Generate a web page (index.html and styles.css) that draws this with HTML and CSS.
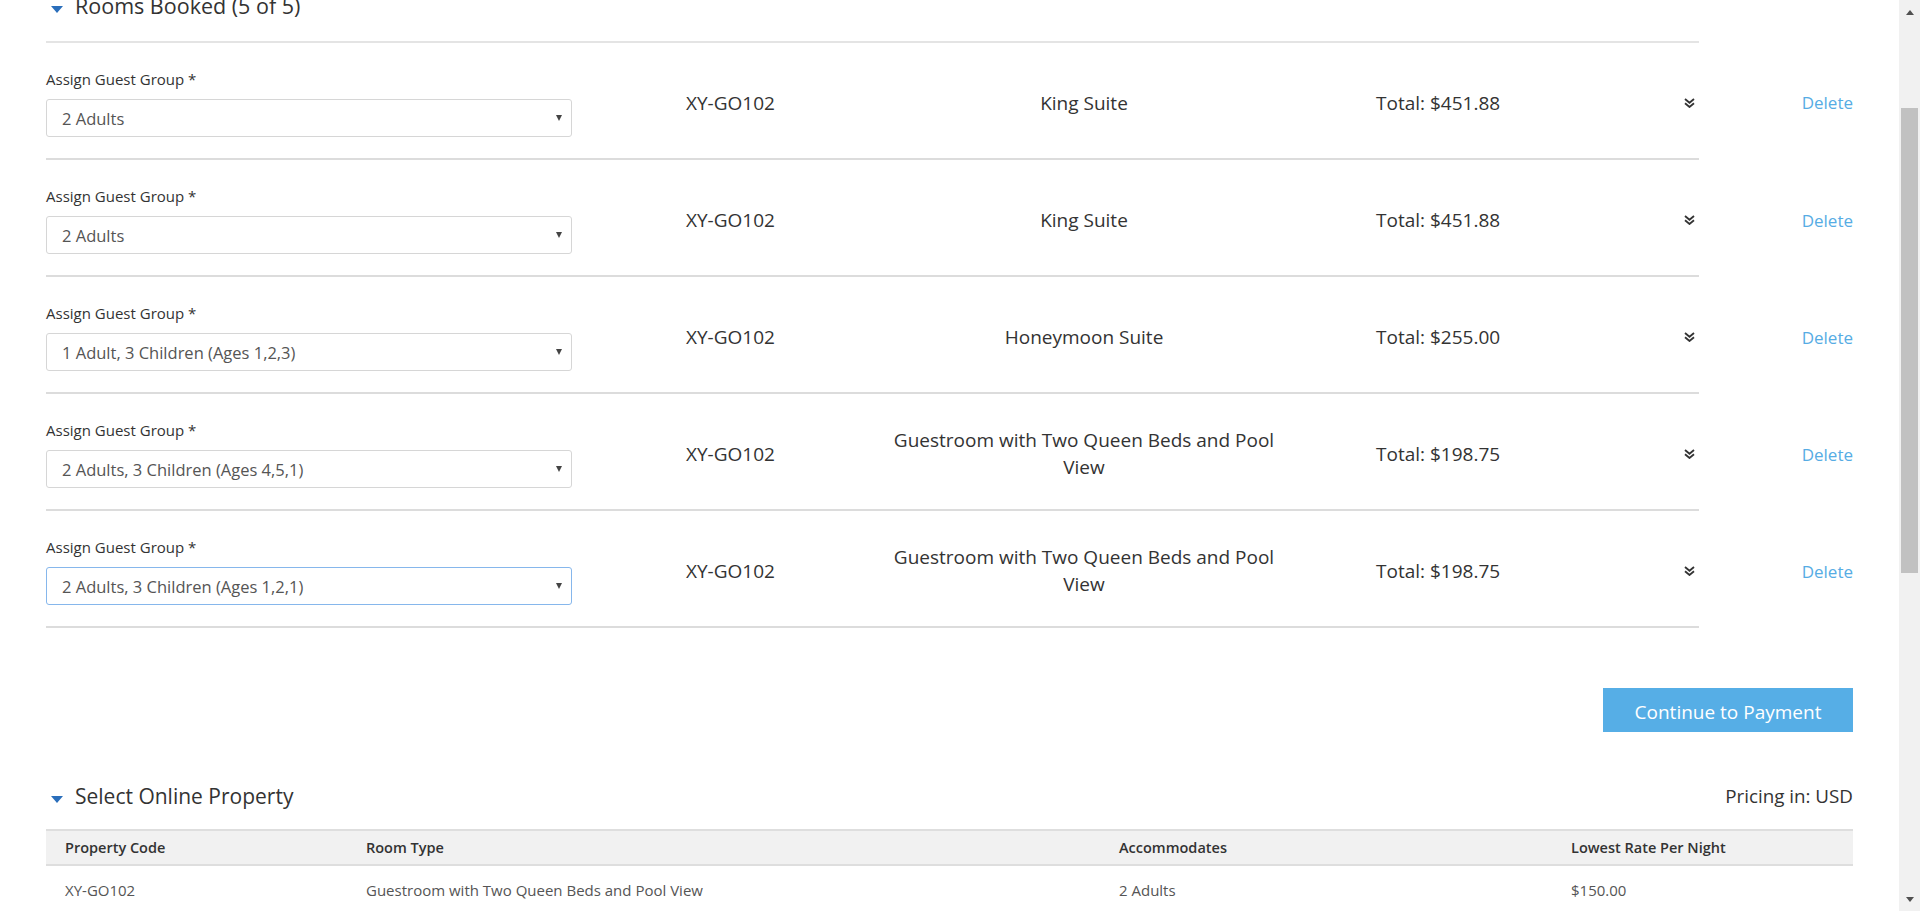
FILE: index.html
```html
<!DOCTYPE html>
<html lang="en">
<head>
<meta charset="utf-8">
<title>Rooms Booked</title>
<link rel="stylesheet" href="styles.css">
</head>
<body>
<div class="page">
  <main class="main">
    <section class="booked">
      <h2 class="section-title first"><span class="caret"></span>Rooms Booked (5 of 5)</h2>
      <div class="rooms">
        <div class="room">
          <div class="room-main">
            <div class="guest">
              <label class="guest-label">Assign Guest Group *</label>
              <div class="select"><span>2 Adults</span><span class="sel-arrow"></span></div>
            </div>
            <div class="code">XY-GO102</div>
            <div class="type">King Suite</div>
            <div class="total">Total: $451.88</div>
            <div class="expand"><svg width="11" height="10" viewBox="0 0 11 10"><path d="M1 1l4.5 3.8L10 1M1 5.2L5.5 9 10 5.2" fill="none" stroke="#333" stroke-width="1.8"/></svg></div>
          </div>
          <div class="delete"><a href="#">Delete</a></div>
        </div>
        <div class="room">
          <div class="room-main">
            <div class="guest">
              <label class="guest-label">Assign Guest Group *</label>
              <div class="select"><span>2 Adults</span><span class="sel-arrow"></span></div>
            </div>
            <div class="code">XY-GO102</div>
            <div class="type">King Suite</div>
            <div class="total">Total: $451.88</div>
            <div class="expand"><svg width="11" height="10" viewBox="0 0 11 10"><path d="M1 1l4.5 3.8L10 1M1 5.2L5.5 9 10 5.2" fill="none" stroke="#333" stroke-width="1.8"/></svg></div>
          </div>
          <div class="delete"><a href="#">Delete</a></div>
        </div>
        <div class="room">
          <div class="room-main">
            <div class="guest">
              <label class="guest-label">Assign Guest Group *</label>
              <div class="select"><span>1 Adult, 3 Children (Ages 1,2,3)</span><span class="sel-arrow"></span></div>
            </div>
            <div class="code">XY-GO102</div>
            <div class="type">Honeymoon Suite</div>
            <div class="total">Total: $255.00</div>
            <div class="expand"><svg width="11" height="10" viewBox="0 0 11 10"><path d="M1 1l4.5 3.8L10 1M1 5.2L5.5 9 10 5.2" fill="none" stroke="#333" stroke-width="1.8"/></svg></div>
          </div>
          <div class="delete"><a href="#">Delete</a></div>
        </div>
        <div class="room">
          <div class="room-main">
            <div class="guest">
              <label class="guest-label">Assign Guest Group *</label>
              <div class="select"><span>2 Adults, 3 Children (Ages 4,5,1)</span><span class="sel-arrow"></span></div>
            </div>
            <div class="code">XY-GO102</div>
            <div class="type">Guestroom with Two Queen Beds and Pool View</div>
            <div class="total">Total: $198.75</div>
            <div class="expand"><svg width="11" height="10" viewBox="0 0 11 10"><path d="M1 1l4.5 3.8L10 1M1 5.2L5.5 9 10 5.2" fill="none" stroke="#333" stroke-width="1.8"/></svg></div>
          </div>
          <div class="delete"><a href="#">Delete</a></div>
        </div>
        <div class="room">
          <div class="room-main">
            <div class="guest">
              <label class="guest-label">Assign Guest Group *</label>
              <div class="select focused"><span>2 Adults, 3 Children (Ages 1,2,1)</span><span class="sel-arrow"></span></div>
            </div>
            <div class="code">XY-GO102</div>
            <div class="type">Guestroom with Two Queen Beds and Pool View</div>
            <div class="total">Total: $198.75</div>
            <div class="expand"><svg width="11" height="10" viewBox="0 0 11 10"><path d="M1 1l4.5 3.8L10 1M1 5.2L5.5 9 10 5.2" fill="none" stroke="#333" stroke-width="1.8"/></svg></div>
          </div>
          <div class="delete"><a href="#">Delete</a></div>
        </div>
      </div>
      <div class="actions"><button class="btn-primary" type="button">Continue to Payment</button></div>
    </section>
    <section class="property">
      <div class="property-head">
        <h2 class="section-title"><span class="caret"></span>Select Online Property</h2>
        <span class="pricing">Pricing in: USD</span>
      </div>
      <table class="prop-table">
        <colgroup><col class="c1"><col class="c2"><col class="c3"><col class="c4"></colgroup>
        <thead>
          <tr><th>Property Code</th><th>Room Type</th><th>Accommodates</th><th>Lowest Rate Per Night</th></tr>
        </thead>
        <tbody>
          <tr><td>XY-GO102</td><td>Guestroom with Two Queen Beds and Pool View</td><td>2 Adults</td><td>$150.00</td></tr>
        </tbody>
      </table>
    </section>
  </main>
  <aside class="scrollbar">
    <div class="sb-btn"><span class="sb-up"></span></div>
    <div class="sb-thumb"></div>
    <div class="sb-btn sb-bottom"><span class="sb-down"></span></div>
  </aside>
</div>
</body>
</html>
```

FILE: styles.css
```css
html, body {
  margin: 0;
  padding: 0;
}
body {
  font-family: "Open Sans", "Noto Sans", sans-serif;
  color: #333;
  background: #fff;
}
.page {
  display: flex;
  height: 911px;
  overflow: hidden;
}
.main {
  flex: 1;
  min-width: 0;
  padding: 0 46px;
  overflow: hidden;
}

/* section titles */
.section-title {
  display: flex;
  align-items: center;
  margin: 0;
  height: 30px;
  font-size: 21px;
  font-weight: 400;
  line-height: 30px;
  color: #333;
}
.section-title.first {
  margin-top: -9px;
  font-size: 21.5px;
}
.caret {
  width: 0;
  height: 0;
  border-left: 6.5px solid transparent;
  border-right: 6.5px solid transparent;
  border-top: 7px solid #2a6ebb;
  margin: 6px 12px 0 5px;
}

/* rooms */
.rooms {
  margin-top: 20px;
  width: 1807px;
}
.room {
  display: flex;
}
.room-main {
  flex: 1;
  display: grid;
  grid-template-columns: 640px 198px 400px 1fr auto;
  align-items: center;
  padding: 26px 0 21px;
  border-bottom: 2px solid #dcdcdc;
}
.room:first-child .room-main {
  border-top: 2px solid #e4e4e4;
}
.guest {
  width: 526px;
}
.guest-label {
  display: block;
  font-size: 15px;
  line-height: 20px;
  margin-bottom: 10px;
  color: #333;
}
.select {
  display: flex;
  align-items: center;
  justify-content: space-between;
  box-sizing: border-box;
  height: 38px;
  border: 1px solid #d6d6d6;
  border-radius: 3px;
  padding: 0 9px 0 15px;
  font-size: 16.5px;
  color: #555;
  background: #fff;
}
.select.focused {
  border-color: #86b7ec;
}
.sel-arrow {
  width: 0;
  height: 0;
  border-left: 3.5px solid transparent;
  border-right: 3.5px solid transparent;
  border-top: 6px solid #444;
}
.code,
.type,
.total {
  font-size: 19px;
  line-height: 27px;
  color: #333;
}
.type {
  text-align: center;
}
.total {
  padding-left: 92px;
}
.expand {
  display: flex;
  padding-right: 4px;
}
.delete {
  width: 154px;
  display: flex;
  align-items: center;
  justify-content: flex-end;
  padding-top: 3px;
  box-sizing: border-box;
}
.delete a {
  font-size: 17px;
  color: #56ace4;
  text-decoration: none;
}

/* actions */
.actions {
  display: flex;
  justify-content: flex-end;
  margin-top: 60px;
}
.btn-primary {
  width: 250px;
  height: 44px;
  border: none;
  background: #56aee6;
  color: #fff;
  font-family: inherit;
  font-size: 19px;
  padding: 3px 0 0;
}

/* property */
.property-head {
  display: flex;
  align-items: center;
  justify-content: space-between;
  margin-top: 49px;
}
.pricing {
  font-size: 18.8px;
  color: #333;
}
.prop-table {
  width: 100%;
  margin-top: 18px;
  border-collapse: collapse;
  table-layout: fixed;
}
.prop-table .c1 { width: 301px; }
.prop-table .c2 { width: 753px; }
.prop-table .c3 { width: 452px; }
.prop-table .c4 { width: 301px; }
.prop-table th {
  background: #f1f1f1;
  border-top: 2px solid #dedede;
  border-bottom: 2px solid #dedede;
  padding: 7px 19px;
  line-height: 19px;
  text-align: left;
  font-size: 14.5px;
  font-weight: 600;
  color: #333;
}
.prop-table td {
  padding: 14px 19px;
  line-height: 20px;
  font-size: 15px;
  color: #555;
}

/* fake scrollbar */
.scrollbar {
  width: 21px;
  flex: none;
  background: #f1f1f1;
  display: flex;
  flex-direction: column;
}
.sb-btn {
  height: 24px;
  display: flex;
  align-items: center;
  justify-content: center;
}
.sb-bottom {
  margin-top: auto;
}
.sb-up {
  width: 0;
  height: 0;
  border-left: 4px solid transparent;
  border-right: 4px solid transparent;
  border-bottom: 5px solid #505050;
}
.sb-down {
  width: 0;
  height: 0;
  border-left: 4px solid transparent;
  border-right: 4px solid transparent;
  border-top: 5px solid #505050;
}
.sb-thumb {
  margin: 84px 2px 0;
  height: 465px;
  background: #c1c1c1;
}
```
